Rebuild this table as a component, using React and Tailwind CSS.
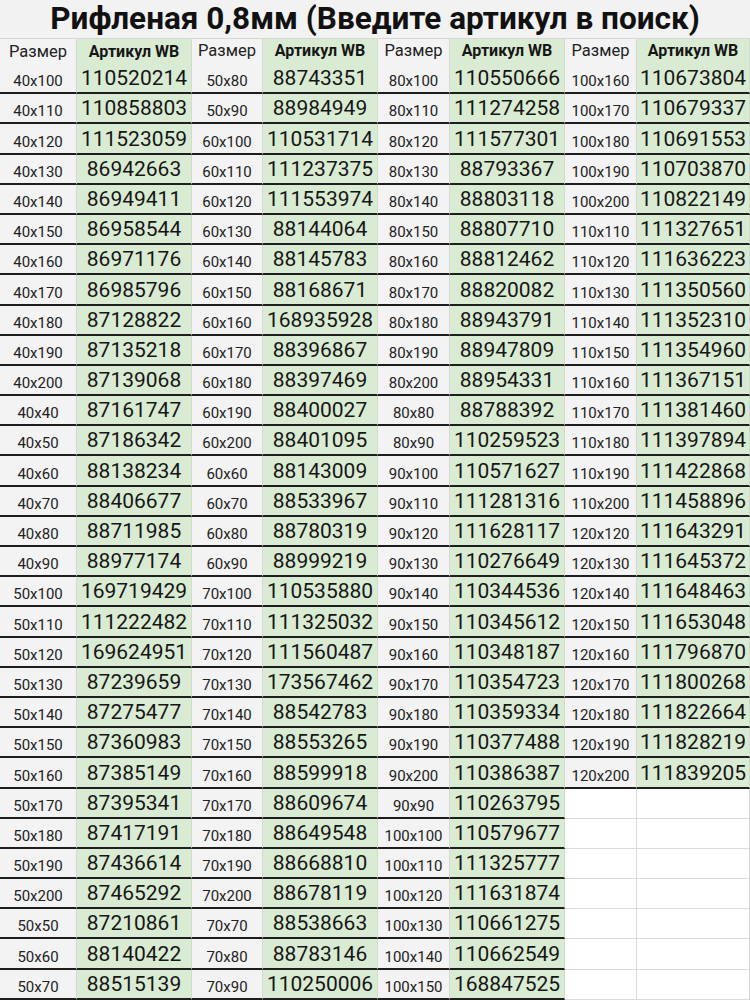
import React from "react";

const c1 = [
  ["40x100", "110520214"], ["40x110", "110858803"], ["40x120", "111523059"], ["40x130", "86942663"],
  ["40x140", "86949411"], ["40x150", "86958544"], ["40x160", "86971176"], ["40x170", "86985796"],
  ["40x180", "87128822"], ["40x190", "87135218"], ["40x200", "87139068"], ["40x40", "87161747"],
  ["40x50", "87186342"], ["40x60", "88138234"], ["40x70", "88406677"], ["40x80", "88711985"],
  ["40x90", "88977174"], ["50x100", "169719429"], ["50x110", "111222482"], ["50x120", "169624951"],
  ["50x130", "87239659"], ["50x140", "87275477"], ["50x150", "87360983"], ["50x160", "87385149"],
  ["50x170", "87395341"], ["50x180", "87417191"], ["50x190", "87436614"], ["50x200", "87465292"],
  ["50x50", "87210861"], ["50x60", "88140422"], ["50x70", "88515139"],
];
const c2 = [
  ["50x80", "88743351"], ["50x90", "88984949"], ["60x100", "110531714"], ["60x110", "111237375"],
  ["60x120", "111553974"], ["60x130", "88144064"], ["60x140", "88145783"], ["60x150", "88168671"],
  ["60x160", "168935928"], ["60x170", "88396867"], ["60x180", "88397469"], ["60x190", "88400027"],
  ["60x200", "88401095"], ["60x60", "88143009"], ["60x70", "88533967"], ["60x80", "88780319"],
  ["60x90", "88999219"], ["70x100", "110535880"], ["70x110", "111325032"], ["70x120", "111560487"],
  ["70x130", "173567462"], ["70x140", "88542783"], ["70x150", "88553265"], ["70x160", "88599918"],
  ["70x170", "88609674"], ["70x180", "88649548"], ["70x190", "88668810"], ["70x200", "88678119"],
  ["70x70", "88538663"], ["70x80", "88783146"], ["70x90", "110250006"],
];
const c3 = [
  ["80x100", "110550666"], ["80x110", "111274258"], ["80x120", "111577301"], ["80x130", "88793367"],
  ["80x140", "88803118"], ["80x150", "88807710"], ["80x160", "88812462"], ["80x170", "88820082"],
  ["80x180", "88943791"], ["80x190", "88947809"], ["80x200", "88954331"], ["80x80", "88788392"],
  ["80x90", "110259523"], ["90x100", "110571627"], ["90x110", "111281316"], ["90x120", "111628117"],
  ["90x130", "110276649"], ["90x140", "110344536"], ["90x150", "110345612"], ["90x160", "110348187"],
  ["90x170", "110354723"], ["90x180", "110359334"], ["90x190", "110377488"], ["90x200", "110386387"],
  ["90x90", "110263795"], ["100x100", "110579677"], ["100x110", "111325777"], ["100x120", "111631874"],
  ["100x130", "110661275"], ["100x140", "110662549"], ["100x150", "168847525"],
];
const c4 = [
  ["100x160", "110673804"], ["100x170", "110679337"], ["100x180", "110691553"], ["100x190", "110703870"],
  ["100x200", "110822149"], ["110x110", "111327651"], ["110x120", "111636223"], ["110x130", "111350560"],
  ["110x140", "111352310"], ["110x150", "111354960"], ["110x160", "111367151"], ["110x170", "111381460"],
  ["110x180", "111397894"], ["110x190", "111422868"], ["110x200", "111458896"], ["120x120", "111643291"],
  ["120x130", "111645372"], ["120x140", "111648463"], ["120x150", "111653048"], ["120x160", "111796870"],
  ["120x170", "111800268"], ["120x180", "111822664"], ["120x190", "111828219"], ["120x200", "111839205"],
];
const cols = [c1, c2, c3, c4];

const GRID = "grid grid-cols-[77px_115px_71px_115px_72px_115px_72px_113px]";

function SizeCell({ v }) {
  if (!v) return <div className="border-r border-b border-[#dadada] bg-white" />;
  return (
    <div className="flex items-end justify-center pb-[3px] bg-[#f3f3f3] border-r border-[#d6d6d6] border-b-2 border-b-[#1e1e1e] text-[15px] leading-none text-[#222]">
      {v}
    </div>
  );
}

function ArtCell({ v }) {
  if (!v) return <div className="border-r border-b border-[#dadada] bg-white" />;
  return (
    <div className="flex items-end justify-center pb-[3px] bg-[#daebd3] border-r border-[#cfdcc9] border-b-2 border-b-[#1e1e1e] text-[21px] leading-none text-[#161616]">
      {v}
    </div>
  );
}

export default function App() {
  const rows = Array.from({ length: 31 }, (_, i) => i);
  return (
    <div className="w-[750px] h-[1000px] overflow-hidden bg-[#f2f2f2] font-['Roboto','Liberation_Sans',sans-serif]">
      <div className="h-[38px] flex items-center justify-center text-[31.5px] font-bold text-[#111] leading-none">
        Рифленая 0,8мм (Введите артикул в поиск)
      </div>
      <div className={`${GRID} h-[26px] border-t border-[#d6d6d6]`}>
        {[0, 1, 2, 3].map((k) => (
          <React.Fragment key={k}>
            <div className={`flex items-center justify-center bg-[#f3f3f3] border-r border-[#d6d6d6] text-[16.5px] text-[#222] ${k === 0 ? "border-b border-b-[#cfcfcf]" : "border-b-2 border-b-[#1e1e1e]"}`}>
              Размер
            </div>
            <div className={`flex items-center justify-center bg-[#daebd3] border-r border-[#cfdcc9] text-[16px] font-bold text-[#161616] ${k === 0 ? "border-b border-b-[#cfcfcf]" : "border-b-2 border-b-[#1e1e1e]"}`}>
              Артикул WB
            </div>
          </React.Fragment>
        ))}
      </div>
      {rows.map((i) => (
        <div key={i} className={`${GRID} h-[30.2px]`}>
          {cols.map((c, k) => {
            const item = c[i];
            return (
              <React.Fragment key={k}>
                <SizeCell v={item ? item[0] : null} />
                <ArtCell v={item ? item[1] : null} />
              </React.Fragment>
            );
          })}
        </div>
      ))}
    </div>
  );
}
